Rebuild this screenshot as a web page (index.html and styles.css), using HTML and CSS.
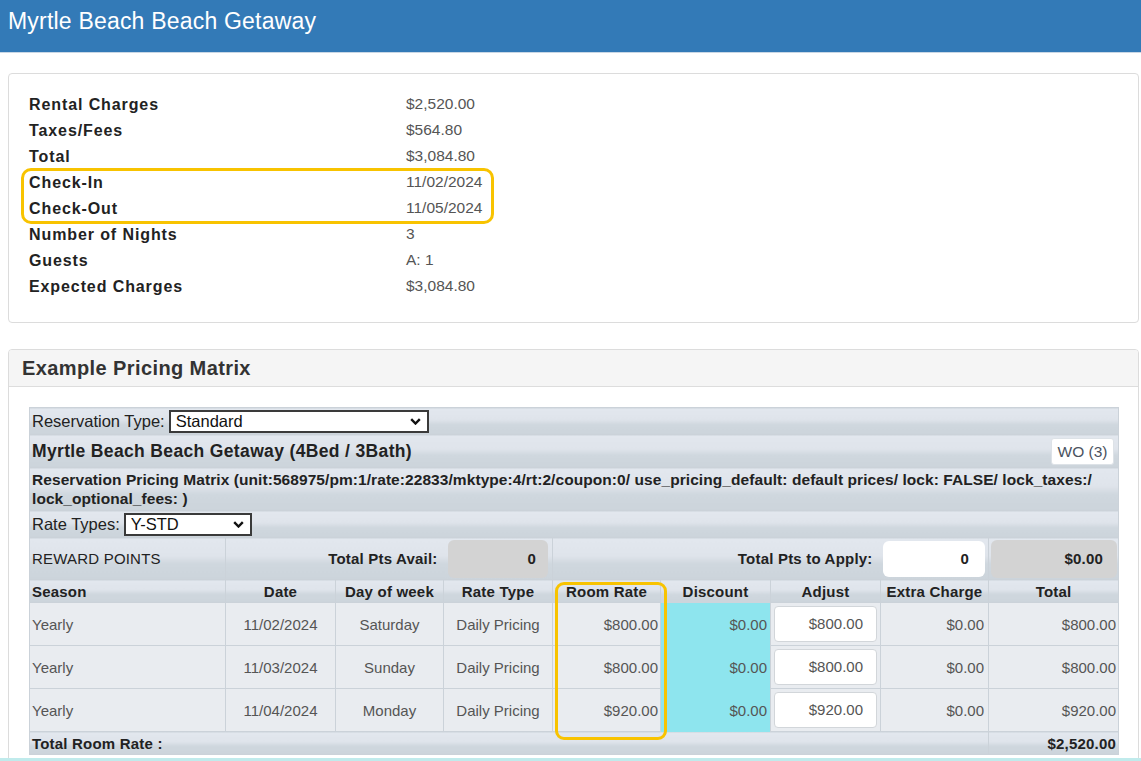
FILE: index.html
```html
<!DOCTYPE html>
<html lang="en">
<head>
<meta charset="utf-8">
<title>Myrtle Beach Beach Getaway</title>
<link rel="stylesheet" href="styles.css">
</head>
<body>
<header class="topbar"><h1>Myrtle Beach Beach Getaway</h1></header>

<section class="panel summary">
  <div class="srow"><span class="lbl">Rental Charges</span><span class="val">$2,520.00</span></div>
  <div class="srow"><span class="lbl">Taxes/Fees</span><span class="val">$564.80</span></div>
  <div class="srow"><span class="lbl">Total</span><span class="val">$3,084.80</span></div>
  <div class="hl">
    <div class="srow"><span class="lbl">Check-In</span><span class="val">11/02/2024</span></div>
    <div class="srow"><span class="lbl">Check-Out</span><span class="val">11/05/2024</span></div>
  </div>
  <div class="srow"><span class="lbl">Number of Nights</span><span class="val">3</span></div>
  <div class="srow"><span class="lbl">Guests</span><span class="val">A: 1</span></div>
  <div class="srow"><span class="lbl">Expected Charges</span><span class="val">$3,084.80</span></div>
</section>

<section class="panel matrix">
  <div class="panel-heading">Example Pricing Matrix</div>
  <div class="panel-body">
    <div class="tbl-wrap">
      <table class="pm">
        <colgroup>
          <col class="c-season"><col class="c-date"><col class="c-day"><col class="c-type"><col class="c-rate">
          <col class="c-disc"><col class="c-adj"><col class="c-extra"><col class="c-total">
        </colgroup>
        <tr class="bar h27">
          <td colspan="9"><span class="sel-label">Reservation Type:</span><span class="fsel fsel-res">Standard<svg class="chev" viewBox="0 0 11 7" width="11" height="7"><path d="M1.2 1.2 L5.5 5.5 L9.8 1.2" fill="none" stroke="#111" stroke-width="2.4"/></svg></span></td>
        </tr>
        <tr class="bar h33">
          <td colspan="9"><div class="title-line"><span class="unit-title">Myrtle Beach Beach Getaway (4Bed / 3Bath)</span><span class="wo-btn">WO (3)</span></div></td>
        </tr>
        <tr class="bar h43">
          <td colspan="9" class="matrix-info">Reservation Pricing Matrix (unit:568975/pm:1/rate:22833/mktype:4/rt:2/coupon:0/ use_pricing_default: default prices/ lock: FALSE/ lock_taxes:/ lock_optional_fees: )</td>
        </tr>
        <tr class="bar h27">
          <td colspan="9"><span class="sel-label">Rate Types:</span><span class="fsel fsel-rate">Y-STD<svg class="chev" viewBox="0 0 11 7" width="11" height="7"><path d="M1.2 1.2 L5.5 5.5 L9.8 1.2" fill="none" stroke="#111" stroke-width="2.4"/></svg></span></td>
        </tr>
        <tr class="bar h42 reward">
          <td class="rp">REWARD POINTS</td>
          <td colspan="2" class="rlabel">Total Pts Avail:</td>
          <td class="boxcell nob-l"><div class="gbox box-avail">0</div></td>
          <td colspan="3" class="rlabel rlabel2">Total Pts to Apply:</td>
          <td class="boxcell nob-l"><div class="wbox box-apply">0</div></td>
          <td class="boxcell"><div class="gbox box-money">$0.00</div></td>
        </tr>
        <tr class="bar h23 head">
          <td class="left">Season</td><td>Date</td><td>Day of week</td><td>Rate Type</td><td>Room Rate</td>
          <td>Discount</td><td>Adjust</td><td>Extra Charge</td><td>Total</td>
        </tr>
        <tr class="data h43">
          <td class="left">Yearly</td><td class="ctr">11/02/2024</td><td class="ctr">Saturday</td><td class="ctr">Daily Pricing</td>
          <td class="num">$800.00</td><td class="num disc">$0.00</td><td class="adjcell"><div class="adj">$800.00</div></td>
          <td class="num extra">$0.00</td><td class="num">$800.00</td>
        </tr>
        <tr class="data h43">
          <td class="left">Yearly</td><td class="ctr">11/03/2024</td><td class="ctr">Sunday</td><td class="ctr">Daily Pricing</td>
          <td class="num">$800.00</td><td class="num disc">$0.00</td><td class="adjcell"><div class="adj">$800.00</div></td>
          <td class="num extra">$0.00</td><td class="num">$800.00</td>
        </tr>
        <tr class="data h43">
          <td class="left">Yearly</td><td class="ctr">11/04/2024</td><td class="ctr">Monday</td><td class="ctr">Daily Pricing</td>
          <td class="num">$920.00</td><td class="num disc">$0.00</td><td class="adjcell"><div class="adj">$920.00</div></td>
          <td class="num extra">$0.00</td><td class="num">$920.00</td>
        </tr>
        <tr class="bar h23 totalrow">
          <td colspan="8" class="left">Total Room Rate :</td>
          <td class="num">$2,520.00</td>
        </tr>
      </table>
      <div class="hl-col"></div>
    </div>
  </div>
</section>
<div class="bottom-line"></div>
</body>
</html>
```

FILE: styles.css
```css
* { box-sizing: border-box; }
html, body { margin: 0; padding: 0; }
body {
  font-family: "Liberation Sans", Arial, Helvetica, sans-serif;
  background: #fff;
  color: #333;
}

/* top bar */
.topbar {
  background: #337ab7;
  height: 53px;
  border-bottom: 1px solid #c9d7e5;
  padding: 8px 0 0 8px;
}
.topbar h1 {
  margin: 0;
  font-size: 23px;
  letter-spacing: 0.2px;
  line-height: 26px;
  font-weight: normal;
  color: #fff;
}

/* panels */
.panel {
  border: 1px solid #dcdcdc;
  border-radius: 4px;
  margin: 0 2px 0 8px;
  background: #fff;
}
.summary {
  margin-top: 20px;
  padding: 18px 0 22px 20px;
}
.srow {
  display: grid;
  grid-template-columns: 377px 1fr;
  height: 26px;
  align-items: center;
}
.lbl {
  font-weight: bold;
  font-size: 16px;
  letter-spacing: 0.9px;
  color: #222;
}
.val {
  font-size: 15.5px;
  color: #555;
  margin-top: -3px;
}
.hl {
  margin-left: -6px;
  padding-left: 6px;
  width: 469px;
  border-radius: 8px;
  outline: 3px solid #f8c300;
  outline-offset: -1px;
}

.matrix { margin-top: 26px; }
.panel-heading {
  background: #f5f5f5;
  border-bottom: 1px solid #dddddd;
  border-radius: 3px 3px 0 0;
  height: 37px;
  padding-left: 13px;
  font-size: 20px;
  letter-spacing: 0.4px;
  font-weight: bold;
  line-height: 36px;
  color: #333;
}
.panel-body { padding: 20px; }
.tbl-wrap { position: relative; }

/* pricing table */
table.pm {
  width: 100%;
  border-collapse: collapse;
  table-layout: fixed;
  font-size: 15px;
  letter-spacing: 0.2px;
  color: #222;
  border: 1px solid #c3ccd4;
}
.c-season { width: 196px; }
.c-date { width: 110px; }
.c-day { width: 108px; }
.c-type { width: 109px; }
.c-rate { width: 108px; }
.c-disc { width: 110px; }
.c-adj { width: 110px; }
.c-extra { width: 108px; }
.c-total { width: 130px; }

.pm td {
  border: 1px solid #cbd2d9;
  padding: 0 2px;
  vertical-align: middle;
  white-space: nowrap;
}
.h23 { height: 23px; }
.h27 { height: 27px; }
.h33 { height: 33px; }
.h42 { height: 42px; }
.h43 { height: 43px; }

.bar > td {
  background: linear-gradient(to bottom, #e2e7ee 0%, #dfe4eb 42%, #cfd7de 62%, #ccd4db 100%);
}
.data > td {
  background: #e9ecf0;
  color: #555;
  letter-spacing: 0;
}

.sel-label {
  vertical-align: middle;
  font-size: 16.5px;
  letter-spacing: 0;
}
.fsel {
  display: inline-flex;
  align-items: center;
  justify-content: space-between;
  vertical-align: middle;
  margin-left: 4px;
  height: 23px;
  background: #fff;
  border: 2px solid #3a3a3a;
  padding: 0 6px 0 5px;
  color: #111;
  font-size: 16.5px;
  letter-spacing: 0;
}
.fsel-res { width: 260px; }
.fsel-rate { width: 128px; }
.chev { display: block; }

.title-line {
  display: flex;
  align-items: center;
  justify-content: space-between;
  padding-right: 2px;
}
.unit-title {
  font-weight: bold;
  font-size: 17.5px;
  letter-spacing: 0.35px;
}
.wo-btn {
  background: #fff;
  border: 1px solid #dde2e7;
  border-radius: 3px;
  height: 27px;
  width: 63px;
  line-height: 25px;
  text-align: center;
  font-size: 15.5px;
  letter-spacing: 0;
  color: #4a5260;
}
.matrix-info {
  white-space: normal !important;
  font-weight: bold;
  font-size: 15.5px;
  letter-spacing: 0.07px;
  line-height: 19px;
  padding: 1px 2px 2px !important;
}

.reward .rp { color: #222; }
.rlabel { text-align: right; font-weight: bold; padding-right: 6px !important; }
.rlabel2 { padding-right: 8px !important; }
.boxcell { padding: 1px 2px !important; }
.nob-l { border-left-style: hidden !important; }
.gbox, .wbox {
  height: 38px;
  border-radius: 6px;
  text-align: right;
  font-weight: bold;
  line-height: 38px;
}
.gbox { background: #d3d3d3; }
.wbox { background: #fff; height: 36px; line-height: 36px; }
.box-avail { margin: 0 2px 0 2px; padding-right: 12px; }
.box-apply { margin: 0 1px 0 0; padding-right: 16px; }
.box-money { margin: 0 -1px 0 0; padding-right: 14px; }

.head > td { text-align: center; font-weight: bold; }
.head > td.left, td.left { text-align: left; }
.ctr { text-align: center; }
.num { text-align: right; }
.disc {
  background: #8ee5ee !important;
  border-top-style: hidden !important;
  border-bottom-style: hidden !important;
  padding-right: 3px !important;
}
.extra { padding-right: 4px !important; }
.adjcell { padding: 3px 3px !important; }
.adj {
  background: #fff;
  border: 1px solid #d2d6da;
  border-radius: 4px;
  height: 36px;
  line-height: 34px;
  text-align: right;
  padding-right: 13px;
  color: #555;
}
.totalrow > td { font-weight: bold; color: #222; }

.hl-col {
  position: absolute;
  left: 526px;
  top: 175px;
  width: 112px;
  height: 158px;
  border: 3px solid #f8c300;
  border-radius: 9px;
  pointer-events: none;
}

.bottom-line {
  position: fixed;
  left: 0;
  right: 0;
  bottom: 0;
  height: 3px;
  background: #c0ebec;
}
```
